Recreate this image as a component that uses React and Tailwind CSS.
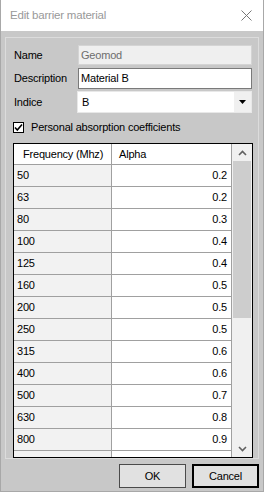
import React from "react";

const rows = [
  ["50", "0.2"],
  ["63", "0.2"],
  ["80", "0.3"],
  ["100", "0.4"],
  ["125", "0.4"],
  ["160", "0.5"],
  ["200", "0.5"],
  ["250", "0.5"],
  ["315", "0.6"],
  ["400", "0.6"],
  ["500", "0.7"],
  ["630", "0.8"],
  ["800", "0.9"],
  ["", ""],
];

const Field = ({ label, children }) => (
  <div className="flex items-center">
    <div className="w-[65px] shrink-0 pl-[1px]">{label}</div>
    <div className="flex-1">{children}</div>
  </div>
);

export default function App() {
  return (
    <div
      className="w-[264px] h-[492px] bg-[#c8c8c8] flex flex-col overflow-hidden text-[11px] tracking-[-0.2px] text-black border-x border-b border-[#a8a8a8]"
      style={{ fontFamily: '"Liberation Sans", Arial, sans-serif' }}
    >
      {/* Title bar */}
      <div className="h-[31px] shrink-0 bg-white flex items-center justify-between pl-[9px] pr-[10px]">
        <span className="text-[#999999] text-[11.5px]">Edit barrier material</span>
        <svg width="11" height="11" viewBox="0 0 11 11" className="mr-[1px]">
          <path d="M0.5 0.5 L10.5 10.5 M10.5 0.5 L0.5 10.5" stroke="#777" strokeWidth="1" />
        </svg>
      </div>

      {/* Group */}
      <div className="mx-[4px] mt-[6px] h-[422px] border border-[#dcdcdc] flex flex-col px-[7px] pt-[7px]">
        <div className="flex flex-col">
          <Field label="Name">
            <div className="h-[20px] border border-[#d4d4d4] bg-[#efefef] text-[#6d6d6d] flex items-center px-[2px] mr-[-1px]">
              Geomod
            </div>
          </Field>
          <div className="h-[3px]" />
          <Field label="Description">
            <div className="h-[21px] border border-[#7a7a7a] bg-white flex items-center px-[2px] mr-[-1px]">
              Material B
            </div>
          </Field>
          <div className="h-[2px]" />
          <Field label="Indice">
            <div className="h-[22px] bg-white flex items-center ml-[-1px] mr-[-1px] border border-[#e8e8e8]">
              <span className="flex-1 pl-[4px]">B</span>
              <div className="w-[17px] h-full bg-[#f0f0f0] flex items-center justify-center">
                <svg width="7" height="4" viewBox="0 0 7 4">
                  <path d="M0 0 H7 L3.5 4 Z" fill="#000" />
                </svg>
              </div>
            </div>
          </Field>
        </div>

        <div className="flex items-center mt-[8px] h-[13px]">
          <div className="w-[11px] h-[11px] border border-black bg-white flex items-center justify-center">
            <svg width="9" height="9" viewBox="0 0 9 9">
              <path d="M1 4.5 L3.3 7 L8 1.5" stroke="#000" strokeWidth="1.6" fill="none" />
            </svg>
          </div>
          <span className="ml-[7px]">Personal absorption coefficients</span>
        </div>

        {/* Table */}
        <div className="mt-[9px] w-[240px] h-[315px] border border-black flex overflow-hidden">
          <div className="w-[218px] flex flex-col overflow-hidden">
            <div className="h-[21px] shrink-0 flex bg-white border-b border-[#a0a0a0]">
              <div className="w-[98px] border-r border-[#a0a0a0] pl-[9px] flex items-center whitespace-nowrap">
                Frequency (Mhz)
              </div>
              <div className="flex-1 border-r border-[#a0a0a0] pl-[7px] flex items-center">Alpha</div>
            </div>
            {rows.map(([f, a], i) => (
              <div key={i} className="h-[22px] shrink-0 flex border-b border-[#a0a0a0]">
                <div className="w-[98px] bg-[#f2f2f2] border-r border-[#a0a0a0] pl-[3px] flex items-center">
                  {f}
                </div>
                <div className="flex-1 bg-white border-r border-[#a0a0a0] pr-[4px] flex items-center justify-end">
                  {a}
                </div>
              </div>
            ))}
          </div>
          {/* Scrollbar */}
          <div className="flex-1 bg-[#f0f0f0] flex flex-col">
            <div className="h-[17px] flex items-center justify-center">
              <svg width="9" height="6" viewBox="0 0 9 6">
                <path d="M1 5 L4.5 1.5 L8 5" stroke="#606060" strokeWidth="1.6" fill="none" />
              </svg>
            </div>
            <div className="h-[157px] mx-[1px] bg-[#cdcdcd]" />
            <div className="flex-1" />
            <div className="h-[17px] flex items-center justify-center">
              <svg width="9" height="6" viewBox="0 0 9 6">
                <path d="M1 1 L4.5 4.5 L8 1" stroke="#606060" strokeWidth="1.6" fill="none" />
              </svg>
            </div>
          </div>
        </div>
      </div>

      {/* Buttons */}
      <div className="flex justify-end gap-[6px] pr-[4px] mt-[5px]">
        <button className="w-[67px] h-[24px] bg-[#e1e1e1] border border-[#4a4a4a] flex items-center justify-center">
          OK
        </button>
        <button className="w-[67px] h-[24px] bg-[#e1e1e1] border-2 border-black flex items-center justify-center">
          Cancel
        </button>
      </div>
    </div>
  );
}
